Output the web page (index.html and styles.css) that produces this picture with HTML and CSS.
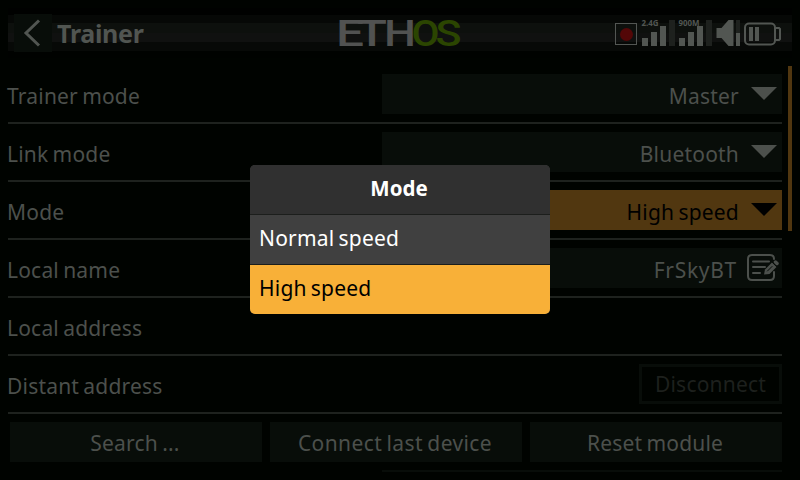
FILE: index.html
```html
<!DOCTYPE html>
<html lang="en">
<head>
<meta charset="utf-8">
<title>Trainer</title>
<link rel="stylesheet" href="styles.css">
</head>
<body>
<header class="topbar">
  <button class="back" aria-label="Back"><svg width="38" height="38" viewBox="0 0 38 38"><path d="M25 6.500 12 19l13 12.500" fill="none" stroke="#515551" stroke-width="3"/></svg></button>
  <h1 class="title">Trainer</h1>
  <svg class="logo" width="130" height="50" viewBox="-3 -5 130 50">
    <g class="logo-text">
      <text x="-3" y="33" textLength="28" lengthAdjust="spacingAndGlyphs">E</text>
      <text x="18" y="33" textLength="30" lengthAdjust="spacingAndGlyphs">T</text>
      <text x="45" y="33" textLength="32" lengthAdjust="spacingAndGlyphs">H</text>
      <text class="green" x="72.500" y="33" textLength="28" lengthAdjust="spacingAndGlyphs">O</text>
      <text class="green" x="96.500" y="33" textLength="26" lengthAdjust="spacingAndGlyphs">S</text>
    </g>
  </svg>
  <svg class="status" width="168" height="30" viewBox="614 18 168 30">
    <rect x="615.500" y="23.500" width="21" height="21" fill="none" stroke="#535653"/>
    <circle cx="626.500" cy="34.500" r="6.500" fill="#530707"/>
    <g fill="#525652">
      <path d="M642 38h6v8h-6zM651 32h6v14h-6zM660 26h6v20h-6zM679 38h6v8h-6zM688 32h6v14h-6zM697 26h6v20h-6z"/>
      <path d="M716.500 28h5l7-8h5v26h-5l-7-8h-5z"/>
      <path d="M736 33h4v13h-4zM749 27h4v14h-4zM755 27h4v14h-4z"/>
      <text class="band" x="641.500" y="26" textLength="17" lengthAdjust="spacingAndGlyphs">2.4G</text>
      <text class="band" x="678.500" y="26" textLength="21" lengthAdjust="spacingAndGlyphs">900M</text>
    </g>
    <path d="M669 20h6v26h-6zM706 20h6v26h-6zM736 20h4v13h-4z" fill="#1e211e"/>
    <g fill="none" stroke="#525652" stroke-width="2">
      <rect x="745" y="23.500" width="30" height="21" rx="4"/>
      <path d="M776 28h3l1 1v10l-1 1h-3"/>
    </g>
  </svg>
</header>
<main class="page">
  <section class="rows">
    <div class="row"><span class="label">Trainer mode</span><div class="field"><span>Master</span><i class="arrow"></i></div></div>
    <div class="row"><span class="label">Link mode</span><div class="field"><span>Bluetooth</span><i class="arrow"></i></div></div>
    <div class="row"><span class="label">Mode</span><div class="field active"><span>High speed</span><i class="arrow"></i></div></div>
    <div class="row"><span class="label">Local name</span><div class="field"><span class="widest">FrSkyBT</span>
      <svg class="edit" width="32" height="28" viewBox="0 0 32 28" fill="none" stroke="#4c504c" stroke-width="2" stroke-linecap="round"><path d="M27 5q0-4-4-4H5Q1 1 1 5v17q0 4 4 4h18q4 0 4-4v-4M6 7.500h16M6 13h12M6 19h7"/><path d="M17 20.500l1-5 7-7 4.500 4.500-7 7z" fill="#4c504c" stroke="none"/><path d="M28.500 8l1.500 1.500" stroke-width="3.500"/><path d="M25 8l5 5M20.500 17l4.500-4.500" stroke="#080d09" stroke-width="1"/></svg></div></div>
    <div class="row"><span class="label">Local address</span></div>
    <div class="row"><span class="label">Distant address</span><button class="disconnect">Disconnect</button></div>
    <div class="actions"><button>Search ...</button><button class="wide">Connect last device</button><button>Reset module</button></div>
    <div class="next-field"></div>
  </section>
  <div class="scrollbar"></div>
</main>
<div class="dialog" role="dialog">
  <h2>Mode</h2>
  <div class="option">Normal speed</div>
  <div class="option selected">High speed</div>
</div>
</body>
</html>
```

FILE: styles.css
```css
* { box-sizing: border-box; }
body {
  margin: 0;
  width: 800px;
  height: 480px;
  overflow: hidden;
  background: #000300;
  color: #4c504c;
  font: 21px/40px "Noto Sans", sans-serif;
  letter-spacing: 0.2px;
  word-spacing: -1.5px;
}
button {
  margin: 0;
  padding: 0;
  border: 0;
  color: inherit;
  background: #080d09;
  font: inherit;
  letter-spacing: inherit;
  word-spacing: inherit;
}
.wide { letter-spacing: 0.4px; }
.widest { letter-spacing: 0.7px; }
.topbar {
  display: flex;
  align-items: center;
  height: 50px;
  margin: 8px 8px 0;
  padding: 0 10px 0 6px;
  background: linear-gradient(#000100 0 7px, #060806 7px 15px, #0d100d 15px 25px, #101110 25px 34px, #070907 34px 43px, #000200 43px);
}
.back { width: 38px; height: 38px; }
.back svg { display: block; }
.title {
  width: 284px;
  margin: 0;
  padding-left: 5px;
  color: #515551;
  font-size: 25px;
  letter-spacing: -0.3px;
}
.logo-text {
  fill: #515251;
  font: 500 36px Roboto, sans-serif;
  letter-spacing: 0;
}
.logo-text .green { fill: #2b4501; }
.status { margin-left: auto; }
.band {
  font: bold 8px "Noto Sans", sans-serif;
  letter-spacing: 0;
}
.page {
  display: flex;
  justify-content: space-between;
  margin: 8px 8px 0;
}
.rows { width: 774px; }
.row {
  display: flex;
  justify-content: space-between;
  height: 58px;
  padding: 8px 0;
  border-bottom: 2px solid #1e221e;
}
.label { padding-top: 1.5px; margin-left: -1px; }
.field {
  display: flex;
  justify-content: flex-end;
  width: 400px;
  height: 40px;
  padding-right: 5px;
  background: #080d09;
}
.field span { padding-top: 1.5px; }
.arrow {
  width: 26px;
  height: 13px;
  margin: 13px 0 0 12px;
  background: #4c504c;
  clip-path: polygon(0 0, 100% 0, 50% 100%);
}
.active { background: #513710; color: #000; }
.active .arrow { background: #000; }
.edit { margin: 6px -2px 0 10px; }
.disconnect {
  width: 143px;
  height: 40px;
  border: 3px solid #080d09;
  background: transparent;
  color: #1d201d;
  line-height: 34px;
}
.actions {
  display: grid;
  grid-template-columns: repeat(3, 252px);
  gap: 8px;
  padding: 8px 0 8px 2px;
}
.actions button { height: 40px; padding: 1px 2px 0 0; }
.next-field {
  height: 2px;
  margin-left: 374px;
  background: #080d09;
}
.scrollbar {
  width: 4px;
  height: 165px;
  background: #513710;
}
.dialog {
  position: absolute;
  left: 250px;
  top: 165px;
  width: 300px;
  height: 149px;
  overflow: hidden;
  border-radius: 5px;
  background: #404040;
  color: #fff;
}
.dialog h2 {
  height: 50px;
  margin: 0;
  padding-right: 2px;
  border-bottom: 1px solid #1c1e1c;
  background: #303030;
  font-size: 20.500px;
  line-height: 47px;
  letter-spacing: 0;
  text-align: center;
}
.option {
  height: 50px;
  padding-left: 9px;
  border-bottom: 1px solid #1c1e1c;
  line-height: 47px;
}
.selected {
  border: 0;
  background: #f8b038;
  color: #000;
}
```
